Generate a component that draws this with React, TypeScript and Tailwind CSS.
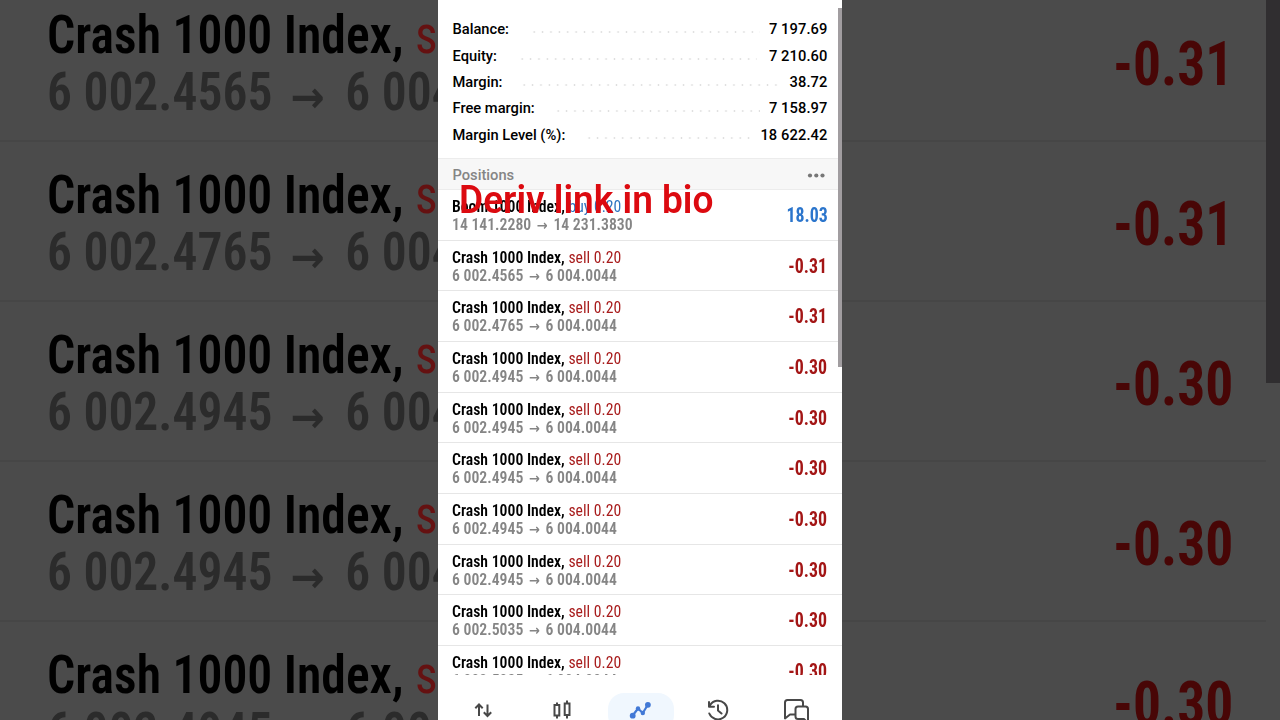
import React from "react";

const summary = [
  { label: "Balance:", value: "7 197.69", pad: "ml-[21px] mr-[9px]" },
  { label: "Equity:", value: "7 210.60", pad: "ml-[21px] mr-[12px]" },
  { label: "Margin:", value: "38.72", pad: "ml-[18px] mr-[10px]" },
  { label: "Free margin:", value: "7 158.97", pad: "ml-[19px] mr-[9px]" },
  { label: "Margin Level (%):", value: "18 622.42", pad: "ml-[20px] mr-[10px]" },
];

type Position = { name: string; side: "buy" | "sell"; open: string; now: string; profit: string };

const crash = (open: string, profit: string): Position => ({
  name: "Crash 1000 Index,",
  side: "sell",
  open,
  now: "6 004.0044",
  profit,
});

const positions: Position[] = [
  { name: "Boom 1000 Index,", side: "buy", open: "14 141.2280", now: "14 231.3830", profit: "18.03" },
  crash("6 002.4565", "-0.31"),
  crash("6 002.4765", "-0.31"),
  crash("6 002.4945", "-0.30"),
  crash("6 002.4945", "-0.30"),
  crash("6 002.4945", "-0.30"),
  crash("6 002.4945", "-0.30"),
  crash("6 002.4945", "-0.30"),
  crash("6 002.5035", "-0.30"),
  crash("6 002.5035", "-0.30"),
];

const backdrop = [positions[1], positions[2], positions[3], positions[4], positions[5]];

function Row({ p }: { p: Position }) {
  const buy = p.side === "buy";
  return (
    <div className="flex h-[50.67px] shrink-0 items-start justify-between border-b border-[#e6e6e6] pl-[14px] pr-[14.5px]">
      <div className="origin-left scale-x-[0.93] pt-[7px] whitespace-nowrap">
        <div className="text-[16.9px] leading-[18px] font-[560] text-black">
          {p.name} <span className={buy ? "font-normal text-[#2f74c0]" : "font-normal text-[#a81c1c]"}>{p.side} 0.20</span>
        </div>
        <div className="text-[16.9px] leading-[18px] font-[560] text-[#858585]">
          {p.open} <span className="mx-[2.2px] inline-block font-['DejaVu_Sans'] text-[14px] leading-none [font-stretch:100%]">→</span> {p.now}
        </div>
      </div>
      <div className={buy ? "origin-right scale-x-[0.92] pt-[14px] text-[19.4px] leading-[24px] font-bold text-[#2b75cc]" : "origin-right scale-x-[0.92] pt-[14px] text-[19.4px] leading-[24px] font-bold text-[#a31515]"}>
        {p.profit}
      </div>
    </div>
  );
}

function LeftBackdrop() {
  return (
    <div className="flex h-full w-[438px] shrink-0 flex-col overflow-hidden bg-[#4b4b4b]">
      <div className="-mt-[18px] flex flex-col">
        {backdrop.map((p, i) => (
          <div key={i} className="h-[160px] shrink-0 border-b-2 border-[#464646] pt-[24px] pl-[46.5px] whitespace-nowrap">
            <div className="origin-left scale-x-[0.93] text-[53.4px] leading-[57px] font-[560] text-black blur-[0.6px]">
              {p.name} <span className="font-normal text-[#651111]">sell 0.20</span>
            </div>
            <div className="origin-left scale-x-[0.93] text-[53.4px] leading-[57px] font-[560] text-[#2b2b2b] blur-[0.6px]">
              {p.open} <span className="mr-[10px] ml-[7px] inline-block translate-y-[2px] font-['DejaVu_Sans'] text-[44px] leading-none [font-stretch:100%]">→</span> {p.now}
            </div>
          </div>
        ))}
      </div>
    </div>
  );
}

function RightBackdrop() {
  return (
    <div className="flex h-full w-[438px] shrink-0 overflow-hidden bg-[#4b4b4b]">
      <div className="-mt-[18px] flex flex-1 flex-col">
        {backdrop.map((p, i) => (
          <div key={i} className="h-[160px] shrink-0 border-b-2 border-[#464646] pt-[45px] pl-[270.5px]">
            <div className="origin-left scale-x-[0.915] text-[60.6px] leading-[76px] font-bold whitespace-nowrap text-[#480606] blur-[0.6px]">{p.profit}</div>
          </div>
        ))}
      </div>
      <div className="h-[383px] w-[14px] bg-[#302e30]" />
    </div>
  );
}

function Nav() {
  return (
    <div className="flex h-[45px] w-full shrink-0 items-start bg-white text-[#484848]">
      <svg width="404" height="45" viewBox="438 675 404 45" fill="none" stroke="currentColor" strokeWidth="2" strokeLinecap="round" strokeLinejoin="round">
        <rect x="608" y="693" width="66" height="38" rx="16" fill="#f0f7fe" stroke="none" />
        <path d="M479 716V704.500M475.300 708.200L479 704.500L482.700 708.200M487.500 704.500V716M483.800 712.300L487.500 716L491.200 712.300" strokeLinecap="butt" strokeLinejoin="miter" />
        <path d="M554.500 705H559.300V715.500H554.500ZM557 702.500V705M557 715.500V718.500M564.700 703.500H569.500V715H564.700ZM567 700.500V703.500M567 715V718.500" strokeLinecap="butt" strokeLinejoin="miter" />
        <path d="M632.700 715.500L638 708.500L642.800 713L647.700 705" stroke="#4279d6" strokeWidth="2.200" />
        <g fill="#4279d6" stroke="none">
          <circle cx="632.700" cy="715.700" r="2.900" />
          <circle cx="638" cy="708.500" r="2.200" />
          <circle cx="642.800" cy="713" r="2.200" />
          <circle cx="647.900" cy="704.800" r="2.900" />
        </g>
        <path d="M710 705.200A9.300 9.300 0 1 1 709.300 713.500M709 702V706.700H714M718 705.200V710.500L721.500 713.500" />
        <path d="M795.500 714.500H790L785 718.500V702.500Q785 700 787.500 700H800.500Q803 700 803 702.500V706.500M798 706.500H805.500Q808 706.500 808 709V723L804 719H798Q795.500 719 795.500 716.500V709Q795.500 706.500 798 706.500Z" />
      </svg>
    </div>
  );
}

export default function App() {
  return (
    <div className="flex h-[720px] w-[1280px] overflow-hidden bg-[#4b4b4b] font-['Roboto_Condensed',Roboto,sans-serif] [font-stretch:75%]">
      <LeftBackdrop />
      <main className="relative flex h-full w-[404px] shrink-0 flex-col overflow-hidden bg-white">
        <section className="flex h-[158px] shrink-0 flex-col pt-[16px] pr-[14.5px] pl-[14.5px] font-[Roboto,sans-serif] [font-stretch:100%]">
          {summary.map((s) => (
            <div key={s.label} className="flex h-[26.4px] shrink-0 items-center text-[14.7px] font-medium text-black">
              <span>{s.label}</span>
              <span className={"mt-[6px] h-[2px] flex-1 bg-[radial-gradient(circle,#dedede_0.9px,transparent_1.1px)] bg-[length:8.4px_2px] " + s.pad} />
              <span className="tracking-[0.1px]">{s.value}</span>
            </div>
          ))}
        </section>
        <header className="flex h-[32px] shrink-0 items-center justify-between border-t border-b border-[#ececec] bg-[#f7f7f7] pr-[17px] pl-[14.5px] pt-[3px] font-[Roboto,sans-serif] text-[14.7px] font-medium text-[#858585] [font-stretch:100%]">
          <span>Positions</span>
          <svg width="18" height="6" viewBox="0 0 18 6" fill="#777777">
            <circle cx="3" cy="2.500" r="2.100" />
            <circle cx="9.300" cy="2.500" r="2.100" />
            <circle cx="15.500" cy="2.500" r="2.100" />
          </svg>
        </header>
        <section className="flex h-[485px] shrink-0 flex-col overflow-hidden">
          {positions.map((p, i) => (
            <Row key={i} p={p} />
          ))}
        </section>
        <Nav />
        <div className="absolute top-[8px] right-0 h-[359px] w-[4px] bg-[#a19da0]" />
        <div className="absolute top-[177px] left-[21px] origin-left scale-x-[0.95] font-[Roboto,sans-serif] text-[39px] leading-[46px] font-semibold whitespace-nowrap text-[#dc0a10] [font-stretch:100%]">
          Deriv link in bio
        </div>
      </main>
      <RightBackdrop />
    </div>
  );
}
